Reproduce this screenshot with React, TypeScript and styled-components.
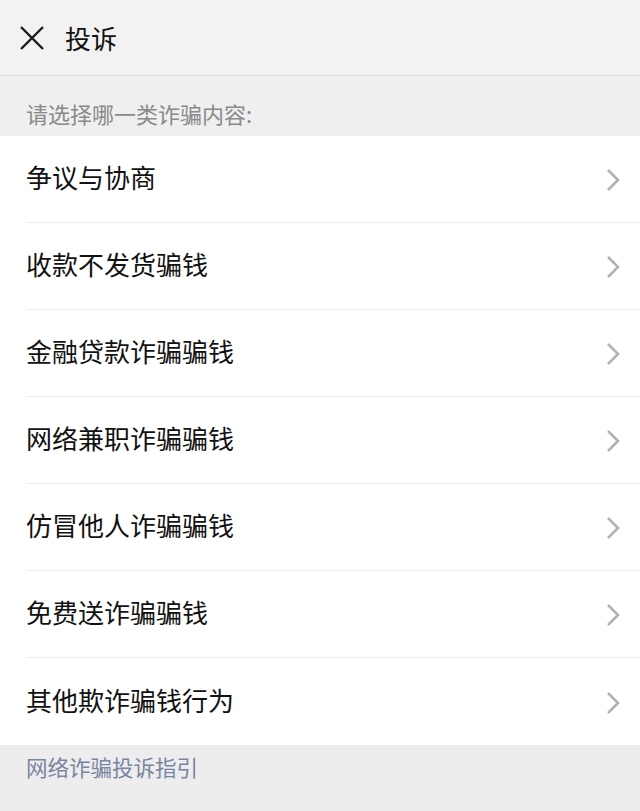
import styled, { createGlobalStyle } from 'styled-components';

const GlobalStyle = createGlobalStyle`
  html, body {
    margin: 0;
    padding: 0;
    background: #ededed;
    font-family: "Noto Sans CJK SC", "Noto Sans", sans-serif;
  }
`;

const Page = styled.div`
  width: 640px;
  min-height: 811px;
  background: #ededed;
`;

const Header = styled.div`
  height: 76px;
  display: flex;
  align-items: center;
  background: #f2f2f2;
  border-bottom: 1px solid #dcdcdc;
  box-sizing: border-box;
  padding-left: 20px;
`;

const CloseButton = styled.div`
  width: 24px;
  height: 24px;
  display: flex;
  margin-right: 21px;
`;

const Title = styled.div`
  font-size: 26px;
  color: #111;
  line-height: 1;
`;

const Hint = styled.div`
  height: 60px;
  display: flex;
  align-items: center;
  padding: 14px 26px 0;
  box-sizing: border-box;
  background: #efefef;
  font-size: 22px;
  color: #8a8a8a;
`;

const List = styled.div`
  background: #fff;
`;

const Row = styled.div<{ $last?: boolean }>`
  height: 87px;
  margin-left: 26px;
  padding-right: 20px;
  display: flex;
  align-items: center;
  justify-content: space-between;
  box-sizing: border-box;
  border-bottom: ${(p) => (p.$last ? 'none' : '1px solid #ececec')};
`;

const RowLabel = styled.span`
  font-size: 26px;
  color: #111;
  margin-top: -5px;
`;

const Chevron = styled.svg`
  width: 14px;
  height: 24px;
  margin-top: 2px;
`;

const Footer = styled.div`
  padding: 6px 26px;
  font-size: 21.5px;
  color: #7985a3;
`;

const items = [
  '争议与协商',
  '收款不发货骗钱',
  '金融贷款诈骗骗钱',
  '网络兼职诈骗骗钱',
  '仿冒他人诈骗骗钱',
  '免费送诈骗骗钱',
  '其他欺诈骗钱行为',
];

const App = function App(): JSX.Element {
  return (
    <Page>
      <GlobalStyle />
      <Header>
        <CloseButton>
          <svg width="24" height="24" viewBox="0 0 24 24">
            <path d="M1 1L23 23M23 1L1 23" stroke="#1a1a1a" strokeWidth="2.4" />
          </svg>
        </CloseButton>
        <Title>投诉</Title>
      </Header>
      <Hint>请选择哪一类诈骗内容:</Hint>
      <List>
        {items.map((label, i) => (
          <Row key={label} $last={i === items.length - 1}>
            <RowLabel>{label}</RowLabel>
            <Chevron viewBox="0 0 14 24">
              <path d="M2 2L12 12L2 22" fill="none" stroke="#b2b2b2" strokeWidth="2.6" />
            </Chevron>
          </Row>
        ))}
      </List>
      <Footer>网络诈骗投诉指引</Footer>
    </Page>
  );
};

export default App;
